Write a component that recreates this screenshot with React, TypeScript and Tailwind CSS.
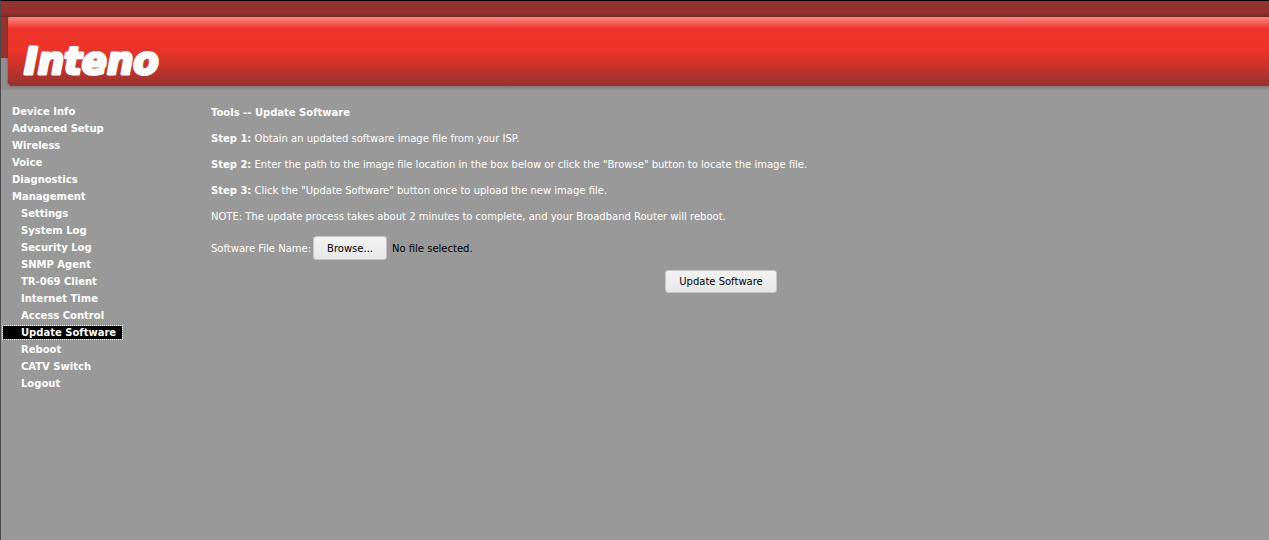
import { useRef, useState } from 'react';

const topItems = ['Device Info', 'Advanced Setup', 'Wireless', 'Voice', 'Diagnostics', 'Management'];
const subItems = [
  'Settings',
  'System Log',
  'Security Log',
  'SNMP Agent',
  'TR-069 Client',
  'Internet Time',
  'Access Control',
  'Update Software',
  'Reboot',
  'CATV Switch',
  'Logout',
];

const buttonClass =
  'rounded-[3px] border border-[#c4c5c6] bg-linear-to-b from-[#f3f3f3] to-[#e6e7e9] px-[13px] text-[10px] text-black';

function Header() {
  return (
    <header className="bg-linear-to-b from-[#96322e] from-0% via-[#96322e] via-60% to-[#7f2b27] to-100% bg-[length:100%_16px] bg-no-repeat pt-4">
      <div className="flex">
        <div className="w-[7px] shrink-0 bg-linear-to-b from-[#96322e] from-[41px] to-[#8e8e8e] to-[41px]" />
        <div className="h-[69px] grow rounded-l-[4px] bg-[linear-gradient(to_bottom,#fb8580_0px,#f5605a_6px,#ef352b_11px,#ec332a_34px,#d0332b_46px,#96322e_69px)] pt-2 pl-2 shadow-[0_0_3px_rgba(60,30,30,0.5)]">
          <svg width="170" height="60" role="img" aria-label="Inteno">
            <text
              x="8"
              y="49"
              fill="white"
              stroke="white"
              strokeWidth="3"
              strokeLinejoin="round"
              className="font-['DejaVu_Sans',sans-serif] text-[37px] leading-none font-bold italic"
            >
              Inteno
            </text>
          </svg>
        </div>
      </div>
      <div className="h-1 bg-[#8e8e8e]" />
    </header>
  );
}

function Menu() {
  return (
    <nav className="w-[210px] shrink-0 pt-[13px] font-bold">
      <ul>
        {topItems.map((item) => (
          <li key={item} className="h-[17px] pl-[11px] leading-[17px]">
            <a href="#">{item}</a>
          </li>
        ))}
        {subItems.map((item) => (
          <li key={item} className="flex h-[17px] items-center pl-px">
            <a
              href="#"
              className={
                item === 'Update Software'
                  ? 'border border-dotted border-white bg-black bg-clip-padding pr-1.5 pl-[18px] leading-[13px]'
                  : 'pl-[19px] leading-[17px]'
              }
            >
              {item}
            </a>
          </li>
        ))}
      </ul>
    </nav>
  );
}

export default function App() {
  const fileRef = useRef<HTMLInputElement>(null);
  const [fileName, setFileName] = useState('No file selected.');

  return (
    <div className="min-h-screen border-t border-l border-t-black border-l-[#4a4a4a] bg-[#999999] font-['DejaVu_Sans',sans-serif] text-[10px] text-white">
      <Header />
      <div className="flex">
        <Menu />
        <main className="grow pt-4 pr-[38px] leading-[13px]">
          <h1 className="mb-[13px] font-bold">Tools -- Update Software</h1>
          <p className="mb-[13px]">
            <b>Step 1:</b> Obtain an updated software image file from your ISP.
          </p>
          <p className="mb-[13px]">
            <b>Step 2:</b> Enter the path to the image file location in the box below or click the "Browse" button to
            locate the image file.
          </p>
          <p className="mb-[13px]">
            <b>Step 3:</b> Click the "Update Software" button once to upload the new image file.
          </p>
          <p className="mb-[13px]">
            NOTE: The update process takes about 2 minutes to complete, and your Broadband Router will reboot.
          </p>
          <form onSubmit={(event) => event.preventDefault()}>
            <div className="flex items-center">
              <label htmlFor="software-file">Software File Name:</label>
              <input
                ref={fileRef}
                id="software-file"
                type="file"
                className="hidden"
                onChange={(event) => setFileName(event.target.files?.[0]?.name ?? 'No file selected.')}
              />
              <button
                type="button"
                className={`${buttonClass} ml-0.5 h-6`}
                onClick={() => fileRef.current?.click()}
              >
                Browse...
              </button>
              <span className="ml-[5px] text-black">{fileName}</span>
            </div>
            <div className="mt-2.5 flex justify-center">
              <button type="submit" className={`${buttonClass} h-[23px]`}>
                Update Software
              </button>
            </div>
          </form>
        </main>
      </div>
    </div>
  );
}
